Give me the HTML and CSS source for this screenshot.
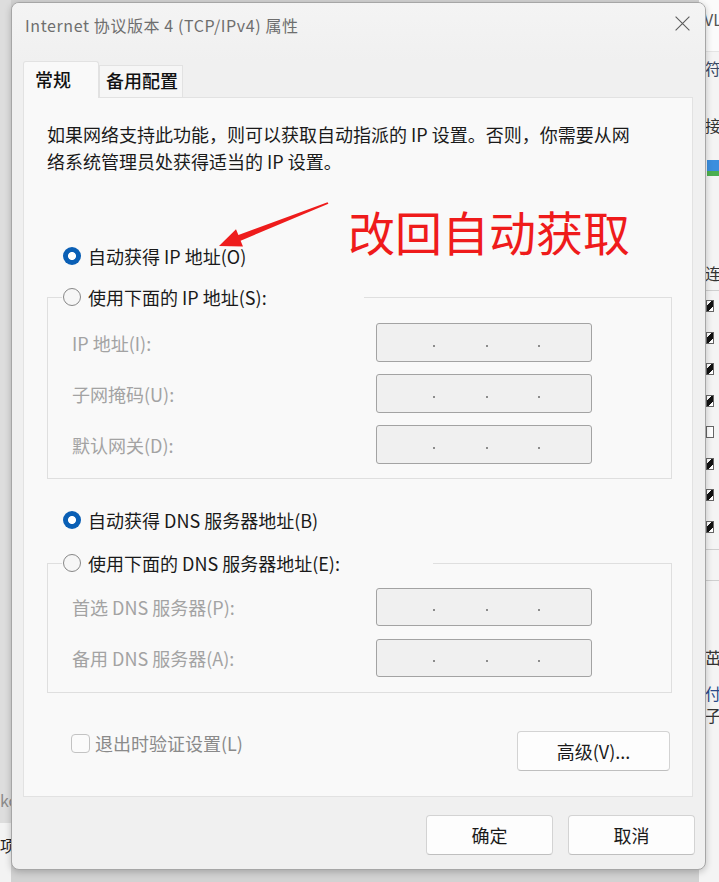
FILE: index.html
```html
<!DOCTYPE html>
<html lang="zh-CN">
<head>
<meta charset="utf-8">
<title>Internet 协议版本 4 (TCP/IPv4) 属性</title>
<link rel="stylesheet" href="styles.css">
</head>
<body>
<div class="desktop">
  <div class="bg-left">
    <span class="bg-ko">ko</span>
    <span class="bg-xiang">项</span>
  </div>
  <div class="bg-right">
    <div class="br-top"><span class="br-txt br-vl">VL</span></div>
    <span class="br-txt br-fu">符</span>
    <span class="br-txt br-jie">接</span>
    <span class="br-icon"></span>
    <span class="br-txt br-lian">连</span>
    <div class="br-checks">
      <span class="br-cb on"></span><span class="br-cb on"></span><span class="br-cb on"></span><span class="br-cb on"></span>
      <span class="br-cb"></span><span class="br-cb on"></span><span class="br-cb on"></span><span class="br-cb on"></span>
    </div>
    <div class="br-sep"></div>
    <span class="br-txt br-zhuo">茁</span>
    <span class="br-txt br-fu2">付</span>
    <span class="br-txt br-zi">子</span>
  </div>

  <div class="dialog">
    <div class="titlebar">
      <div class="title">Internet 协议版本 4 (TCP/IPv4) 属性</div>
      <svg class="close" viewBox="0 0 15 15" aria-hidden="true">
        <path d="M0.6 0.6 L14.4 14.4 M14.4 0.6 L0.6 14.4" stroke="#5c5c5c" stroke-width="1.1" fill="none"/>
      </svg>
    </div>
    <div class="tabs">
      <div class="tab active">常规</div>
      <div class="tab">备用配置</div>
    </div>
    <div class="panel">
      <p class="desc">如果网络支持此功能，则可以获取自动指派的 IP 设置。否则，你需要从网<br>络系统管理员处获得适当的 IP 设置。</p>

      <div class="radio-row r1"><span class="radio checked"></span><span>自动获得 IP 地址(O)</span></div>

      <fieldset class="group g1">
        <legend class="legend l1"><span class="radio"></span><span>使用下面的 IP 地址(S):</span></legend>
        <div class="fields f1">
          <div class="field"><span class="flabel">IP 地址(I):</span><span class="ipbox"><i class="dot"></i><i class="dot"></i><i class="dot"></i></span></div>
          <div class="field"><span class="flabel">子网掩码(U):</span><span class="ipbox"><i class="dot"></i><i class="dot"></i><i class="dot"></i></span></div>
          <div class="field"><span class="flabel">默认网关(D):</span><span class="ipbox"><i class="dot"></i><i class="dot"></i><i class="dot"></i></span></div>
        </div>
      </fieldset>

      <div class="radio-row r3"><span class="radio checked"></span><span>自动获得 DNS 服务器地址(B)</span></div>

      <fieldset class="group g2">
        <legend class="legend l2"><span class="radio"></span><span>使用下面的 DNS 服务器地址(E):</span></legend>
        <div class="fields f2">
          <div class="field f2row"><span class="flabel">首选 DNS 服务器(P):</span><span class="ipbox"><i class="dot"></i><i class="dot"></i><i class="dot"></i></span></div>
          <div class="field f2row"><span class="flabel">备用 DNS 服务器(A):</span><span class="ipbox"><i class="dot"></i><i class="dot"></i><i class="dot"></i></span></div>
        </div>
      </fieldset>

      <div class="bottom-row">
        <div class="check-row"><span class="checkbox"></span><span>退出时验证设置(L)</span></div>
        <div class="btn btn-adv">高级(V)...</div>
      </div>
    </div>
    <div class="footer">
      <div class="btn btn-foot">确定</div>
      <div class="btn btn-foot">取消</div>
    </div>
  </div>

  <div class="annot">改回自动获取</div>
  <svg class="arrow" viewBox="0 0 719 882" aria-hidden="true">
    <polygon fill="#ee1c1c" points="219,246 243,246.5 240.6,240.7 328.4,203.8 327.6,202.2 238.4,235.1 236,229.3"/>
  </svg>
</div>
</body>
</html>
```

FILE: styles.css
```css
html, body {
  margin: 0;
  padding: 0;
}
body {
  width: 719px;
  height: 882px;
  overflow: hidden;
  background: #d2d2d2;
  font-family: "Noto Sans CJK SC", "Noto Sans", sans-serif;
}
.desktop {
  position: relative;
  width: 719px;
  height: 882px;
}

/* backdrop windows */
.bg-left {
  position: absolute;
  left: 0;
  top: 0;
  width: 11px;
  height: 882px;
  background: linear-gradient(#dddddd 0, #dddddd 823px, #f3f3f3 823px);
  display: flex;
  flex-direction: column;
  overflow: hidden;
  font-size: 16px;
}
.bg-ko {
  margin-top: 789px;
  color: #8a8a8a;
  line-height: 22px;
}
.bg-xiang {
  margin-top: 23px;
  color: #222;
  line-height: 22px;
}
.bg-right {
  position: absolute;
  left: 699px;
  top: 0;
  width: 20px;
  height: 882px;
  background: #f4f4f4;
  display: flex;
  flex-direction: column;
  overflow: hidden;
  font-size: 16px;
  color: #333;
}
.br-top {
  height: 52px;
  background: #fbfbfb;
  border-bottom: 1px solid #e4e4e4;
  box-sizing: border-box;
}
.br-txt {
  display: block;
  line-height: 20px;
  padding-left: 6px;
}
.br-vl {
  margin-top: 9px;
  color: #555;
  padding-left: 5px;
}
.br-fu { margin-top: 6px; color: #3a4a66; }
.br-jie { margin-top: 37px; }
.br-icon {
  display: block;
  margin: 25px 0 0 8px;
  width: 12px;
  height: 16px;
  background: linear-gradient(#3b8ede 0, #3b8ede 11px, #4caf50 11px);
}
.br-lian { margin-top: 87px; padding-bottom: 7px; border-bottom: 1px solid #cfcfcf; }
.br-checks {
  display: flex;
  flex-direction: column;
  gap: 19.5px;
  margin-top: 9px;
  padding-left: 7px;
}
.br-cb {
  width: 8px;
  height: 12px;
  box-sizing: border-box;
  border: 1px solid #666;
  background: #fff;
}
.br-cb.on {
  background: linear-gradient(135deg, #fff 0 30%, #111 30% 70%, #fff 70%);
}
.br-sep {
  margin-top: 16px;
  height: 30px;
  border-top: 1px solid #cfcfcf;
  border-bottom: 1px solid #cfcfcf;
}
.br-zhuo { margin-top: 66px; }
.br-fu2 { margin-top: 16px; color: #2a4a8a; }
.br-zi { margin-top: 2px; }

/* dialog */
.dialog {
  position: absolute;
  left: 11px;
  top: 2px;
  width: 695px;
  height: 868px;
  box-sizing: border-box;
  border: 1px solid #a6a6a6;
  border-radius: 8px;
  background: #f0f0f0;
  box-shadow: 0 2px 7px rgba(0, 0, 0, 0.22);
  display: flex;
  flex-direction: column;
  overflow: hidden;
}
.titlebar {
  flex: none;
  height: 58px;
  box-sizing: border-box;
  padding: 10px 15px 0 13px;
  display: flex;
  justify-content: space-between;
  align-items: flex-start;
  background: linear-gradient(#f4f4f4, #f0f0f0);
}
.title {
  font-size: 16px;
  line-height: 24px;
  color: #6e6e6e;
  letter-spacing: 0.6px;
  white-space: nowrap;
}
.close {
  width: 15px;
  height: 15px;
  margin-top: 3px;
}

.tabs {
  flex: none;
  display: flex;
  align-items: flex-end;
  padding-left: 11px;
  position: relative;
  z-index: 1;
  margin-bottom: -1px;
}
.tab {
  box-sizing: border-box;
  height: 32px;
  width: 84px;
  margin-bottom: 1px;
  padding-left: 6px;
  border: 1px solid #e2e2e2;
  border-bottom: none;
  background: #f6f6f6;
  font-size: 18px;
  font-weight: 500;
  line-height: 28px;
  color: #111;
  white-space: nowrap;
}
.tab.active {
  height: 37px;
  width: 76px;
  margin-bottom: 0;
  padding-left: 11px;
  line-height: 34px;
  background: #f9f9f9;
  border-radius: 3px 3px 0 0;
}

.panel {
  flex: none;
  height: 700px;
  margin: 0 12px 0 11px;
  box-sizing: border-box;
  border: 1px solid #e2e2e2;
  background: #f9f9f9;
  padding: 23px 20px 0 23px;
  display: flex;
  flex-direction: column;
  font-size: 18px;
  color: #1a1a1a;
}
.desc {
  margin: 0;
  line-height: 27px;
  white-space: nowrap;
}

.radio-row {
  display: flex;
  align-items: center;
  gap: 7px;
  height: 24px;
  margin-left: 16px;
  white-space: nowrap;
}
.r1 { margin-top: 69px; }
.r3 { margin-top: 29px; }

.radio {
  flex: none;
  width: 18px;
  height: 18px;
  box-sizing: border-box;
  border-radius: 50%;
  border: 1px solid #878787;
  background: #f6f6f6;
}
.radio.checked {
  border: none;
  background: radial-gradient(circle, #ffffff 0, #ffffff 3.6px, #0a5fb5 4.4px);
}

.group {
  margin: 0;
  padding: 0 0 14px 0;
  border: 1px solid #dfdfdf;
  min-width: 0;
}
.g1 { margin-top: 17px; }
.g2 { margin-top: 19px; padding-bottom: 15px; }

.legend {
  display: flex;
  align-items: center;
  gap: 7px;
  height: 24px;
  box-sizing: border-box;
  margin-left: 14px;
  padding: 0 0 0 1px;
  white-space: nowrap;
  color: #1a1a1a;
}
.l1 { width: 302px; }
.l2 { width: 371px; }

.fields {
  display: flex;
  flex-direction: column;
  gap: 12px;
  padding: 14px 0 0 24px;
}
.f2 {
  gap: 13px;
  padding-top: 13px;
}
.field {
  display: flex;
  align-items: center;
  height: 39px;
}
.f2row { height: 38px; }
.flabel {
  width: 304px;
  color: #a3a3a3;
  white-space: nowrap;
}
.ipbox {
  box-sizing: border-box;
  width: 216px;
  height: 100%;
  border: 1px solid #a3a3a3;
  border-radius: 3px;
  background: #f0f0f0;
  display: flex;
  align-items: flex-start;
  gap: 50.5px;
  padding: 21px 0 0 56px;
}
.f2row .ipbox { padding-top: 20px; }
.dot {
  width: 2px;
  height: 2px;
  background: #8c8c8c;
}

.bottom-row {
  display: flex;
  justify-content: space-between;
  align-items: flex-start;
  margin-top: 38px;
}
.check-row {
  display: flex;
  align-items: center;
  gap: 5px;
  height: 24px;
  margin-left: 24px;
  color: #8a8a8a;
  white-space: nowrap;
}
.checkbox {
  width: 19px;
  height: 19px;
  box-sizing: border-box;
  border: 1px solid #c3c3c3;
  border-radius: 4px;
  background: #fbfbfb;
}

.btn {
  box-sizing: border-box;
  height: 40px;
  display: flex;
  align-items: center;
  justify-content: center;
  background: #fdfdfd;
  border: 1px solid #d3d3d3;
  border-bottom-color: #bfbfbf;
  border-radius: 4px;
  color: #1a1a1a;
  font-size: 18px;
  white-space: nowrap;
}
.btn-adv {
  width: 153px;
  margin-right: 2px;
}

.footer {
  flex: none;
  display: flex;
  justify-content: flex-end;
  gap: 15px;
  padding: 18px 10px 0 0;
}
.btn-foot { width: 127px; }

/* annotation overlay */
.annot {
  position: absolute;
  left: 348px;
  top: 207px;
  font-size: 47px;
  line-height: 48px;
  color: #ef1b1b;
  white-space: nowrap;
}
.arrow {
  position: absolute;
  left: 0;
  top: 0;
  width: 719px;
  height: 882px;
  pointer-events: none;
}
```
